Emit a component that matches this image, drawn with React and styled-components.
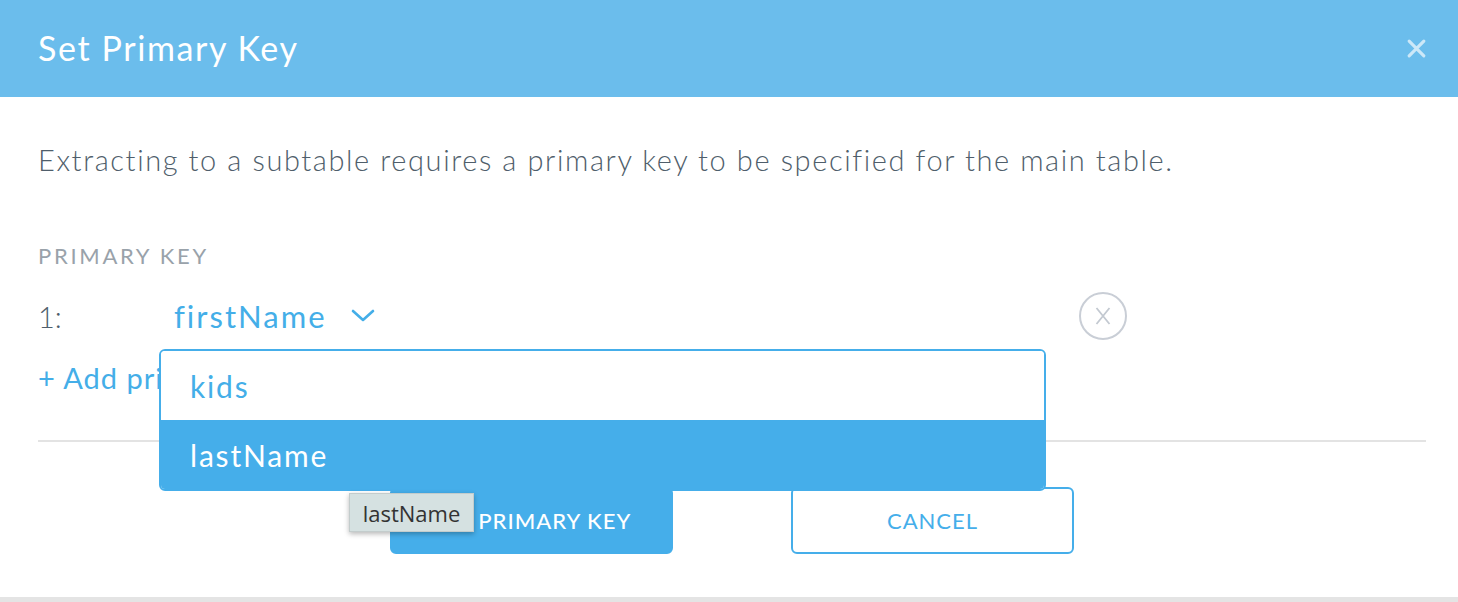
import React from 'react'
import styled, { createGlobalStyle } from 'styled-components'

const GlobalStyle = createGlobalStyle`
  html, body {
    margin: 0;
    padding: 0;
    background: #e4e4e4;
    font-family: Lato, "Open Sans", sans-serif;
  }
`

const Dialog = styled.div`
  width: 1458px;
  height: 597px;
  background: #fff;
  display: flex;
  flex-direction: column;
  overflow: hidden;
`

const Header = styled.div`
  height: 97px;
  flex: none;
  background: #6bbdec;
  display: flex;
  align-items: center;
  justify-content: space-between;
  padding: 0 30px 0 38px;
`

const Title = styled.h1`
  margin: 0;
  color: #fff;
  font-size: 34px;
  font-weight: 400;
  letter-spacing: 1.6px;
  margin-top: -2px;
`

const Close = styled.button`
  border: 0;
  background: none;
  padding: 0;
  width: 24px;
  height: 24px;
  display: flex;
  align-items: center;
  justify-content: center;
  cursor: pointer;
`

const Body = styled.div`
  padding: 0 32px 0 38px;
  display: flex;
  flex-direction: column;
`

const Description = styled.p`
  margin: 46px 0 0;
  font-size: 29px;
  line-height: 34px;
  font-weight: 300;
  color: #4f5e6b;
  letter-spacing: 1.6px;
  white-space: nowrap;
`

const SectionLabel = styled.div`
  margin-top: 66px;
  font-size: 22px;
  line-height: 26px;
  letter-spacing: 2.7px;
  color: #99a2aa;
`

const KeyArea = styled.div`
  position: relative;
`

const KeyRow = styled.div`
  margin-top: 24px;
  height: 46px;
  display: flex;
  align-items: center;
`

const Index = styled.span`
  width: 136px;
  font-size: 29px;
  font-weight: 300;
  color: #4f5e6b;
`

const Select = styled.div`
  display: flex;
  align-items: center;
  gap: 24px;
  color: #44aee8;
  font-size: 31px;
  letter-spacing: 2px;
  flex: 1;
`

const RemoveButton = styled.div`
  width: 44px;
  height: 44px;
  border: 2px solid #c9ced6;
  border-radius: 50%;
  display: flex;
  align-items: center;
  justify-content: center;
  margin-right: 299px;
`

const AddLink = styled.div`
  margin-top: 22px;
  font-size: 29px;
  line-height: 34px;
  color: #44aee8;
  letter-spacing: 1px;
`

const Divider = styled.hr`
  margin: 45px 0 0;
  border: 0;
  border-top: 2px solid #e3e3e3;
`

const Actions = styled.div`
  margin-top: 45px;
  display: flex;
  justify-content: center;
  gap: 118px;
  position: relative;
`

const Button = styled.button`
  width: 283px;
  height: 67px;
  border-radius: 6px;
  font-family: Lato, "Open Sans", sans-serif;
  font-size: 22px;
  letter-spacing: 1px;
  font-weight: ${p => (p.primary ? 500 : 400)};
  border: 2px solid #45aeea;
  background: ${p => (p.primary ? '#45aeea' : '#fff')};
  color: ${p => (p.primary ? '#fff' : '#45aeea')};
  padding: 0;
`

const Menu = styled.div`
  position: absolute;
  left: 121px;
  top: 80px;
  width: 883px;
  border: 2px solid #45aeea;
  border-radius: 6px;
  background: #fff;
  overflow: hidden;
  z-index: 2;
`

const Option = styled.div`
  height: 69px;
  display: flex;
  align-items: center;
  padding-left: 29px;
  font-size: 30px;
  letter-spacing: 1.8px;
  color: ${p => (p.active ? '#fff' : '#44aee8')};
  background: ${p => (p.active ? '#45aeea' : '#fff')};
`

const Tooltip = styled.div`
  position: absolute;
  left: 311px;
  top: 6px;
  width: 125px;
  height: 39px;
  box-sizing: border-box;
  background: #d5e1e1;
  border: 1px solid #c3cccc;
  box-shadow: 0 2px 5px rgba(0, 0, 0, 0.28);
  color: #333;
  font-family: "Open Sans", Lato, sans-serif;
  font-size: 22px;
  display: flex;
  align-items: center;
  justify-content: center;
  z-index: 3;
`

const Chevron = () => (
  <svg width="24" height="14" viewBox="0 0 24 14" fill="none">
    <path d="M2 2 L12 11 L22 2" stroke="#44aee8" strokeWidth="2.6" strokeLinecap="round" strokeLinejoin="round" />
  </svg>
)

const Cross = ({ size, color, width }) => (
  <svg width={size} height={size} viewBox="0 0 20 20" fill="none">
    <path d="M3 3 L17 17 M17 3 L3 17" stroke={color} strokeWidth={width} strokeLinecap="round" />
  </svg>
)

const LetterX = () => (
  <svg width="16" height="18" viewBox="0 0 16 18" fill="none">
    <path d="M1.5 1 L14.5 17 M14.5 1 L1.5 17" stroke="#c3c9d1" strokeWidth="1.8" />
  </svg>
)

export default function App() {
  return (
    <>
      <GlobalStyle />
      <Dialog>
        <Header>
          <Title>Set Primary Key</Title>
          <Close aria-label="close">
            <Cross size={21} color="#cce8f8" width={3} />
          </Close>
        </Header>
        <Body>
          <Description>
            Extracting to a subtable requires a primary key to be specified for the main table.
          </Description>
          <SectionLabel>PRIMARY KEY</SectionLabel>
          <KeyArea>
            <KeyRow>
              <Index>1:</Index>
              <Select>
                firstName
                <Chevron />
              </Select>
              <RemoveButton>
                <LetterX />
              </RemoveButton>
            </KeyRow>
            <AddLink>+ Add primary key column</AddLink>
            <Menu>
              <Option>kids</Option>
              <Option active>lastName</Option>
            </Menu>
          </KeyArea>
          <Divider />
          <Actions>
            <Button primary>SET PRIMARY KEY</Button>
            <Button>CANCEL</Button>
            <Tooltip>lastName</Tooltip>
          </Actions>
        </Body>
      </Dialog>
    </>
  )
}
